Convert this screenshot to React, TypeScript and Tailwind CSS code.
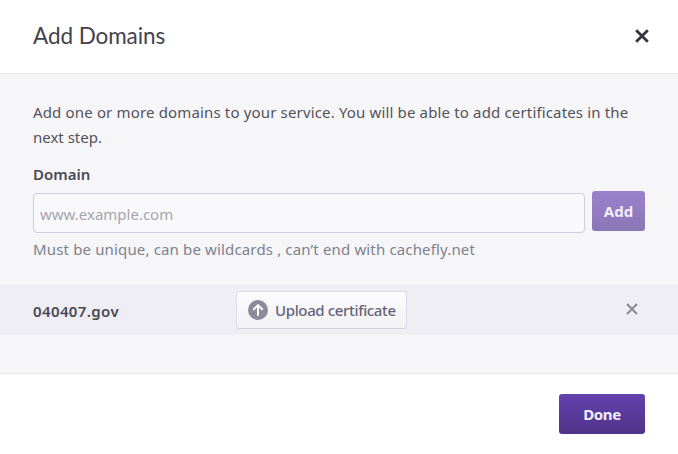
import React from "react";

function Cross({ className, width }: { className: string; width: number }) {
  return (
    <svg viewBox="0 0 14 14" className={className} fill="none" stroke="currentColor" strokeWidth={width}>
      <path d="M1.2 1.2L12.8 12.8M12.8 1.2L1.2 12.8" />
    </svg>
  );
}

export default function App() {
  return (
    <div className="flex h-[454px] w-[678px] flex-col overflow-hidden rounded-b-[4px] bg-white font-['Noto_Sans',sans-serif] text-[15px] text-[#53525b]">
      <header className="flex h-[74px] shrink-0 items-center justify-between border-b border-[#e7e7e9] pr-[29px] pl-[33px]">
        <h1 className="pb-px font-['Lato',sans-serif] text-[22.5px] leading-[30px] tracking-[-0.08px] text-[#44434d]">
          Add Domains
        </h1>
        <button aria-label="Close" className="mt-[-2px]">
          <Cross className="size-[14px] text-[#34333e]" width={2.8} />
        </button>
      </header>
      <main className="h-[299px] shrink-0 bg-[#f6f6f9] pt-[26px]">
        <div className="px-[33px]">
          <p className="whitespace-nowrap leading-[25px]">
            <span className="tracking-[0.155px]">
              Add one or more domains to your service. You will be able to add certificates in the
            </span>
            <br />
            next step.
          </p>
          <label className="mt-[12px] block leading-[25px] font-semibold text-[#4a4953]">Domain</label>
          <div className="mt-1 flex gap-[7px]">
            <input
              placeholder="www.example.com"
              className="mt-[2px] h-10 w-[552px] rounded-[4px] border border-[#cdd0d9] bg-[#f9f9fb] px-[6px] pt-[2px] outline-none placeholder:text-[#a5a5ae]"
            />
            <button className="h-10 w-[53px] rounded-[3px] bg-linear-to-b from-[#9a82cb] to-[#8b76b5] font-bold text-[#f2edfa]">
              Add
            </button>
          </div>
          <p className="mt-1 leading-[25px] tracking-[0.15px] text-[#7d828c]">
            Must be unique, can be wildcards , can’t end with cachefly.net
          </p>
        </div>
        <div className="mt-[23px] flex h-[50px] items-center bg-[#efeef5] pr-10 pl-[33px]">
          <span className="w-[203px] pt-[3px] font-semibold tracking-[0.38px] text-[#4a4953]">040407.gov</span>
          <button className="flex h-[38px] w-[171px] items-center rounded-[3px] border border-[#dcdbe6] border-b-[#cfced9] bg-linear-to-b from-[#fcfcfe] to-[#f2f2f5] pl-[11px] font-medium text-[#65637a]">
            <svg viewBox="0 0 20 20" className="mr-[7px] size-5 shrink-0">
              <circle cx="10" cy="10" r="10" fill="#8c8a9b" />
              <path d="M10 15.8V5.5M5.3 9.8L10 5.1L14.7 9.8" fill="none" stroke="#fff" strokeWidth="2" />
            </svg>
            <span className="whitespace-nowrap tracking-[-0.36px]">Upload certificate</span>
          </button>
          <button aria-label="Remove domain" className="mt-[-2px] ml-auto">
            <Cross className="size-3 text-[#8b8a94]" width={2.4} />
          </button>
        </div>
      </main>
      <footer className="flex h-[81px] shrink-0 items-center justify-end border-t border-[#e7e7e9] pr-[33px]">
        <button className="h-10 w-[86px] rounded-[3px] bg-linear-to-b from-[#6341ae] to-[#503489] font-bold tracking-[-0.35px] text-[#f2edfa]">
          Done
        </button>
      </footer>
    </div>
  );
}
